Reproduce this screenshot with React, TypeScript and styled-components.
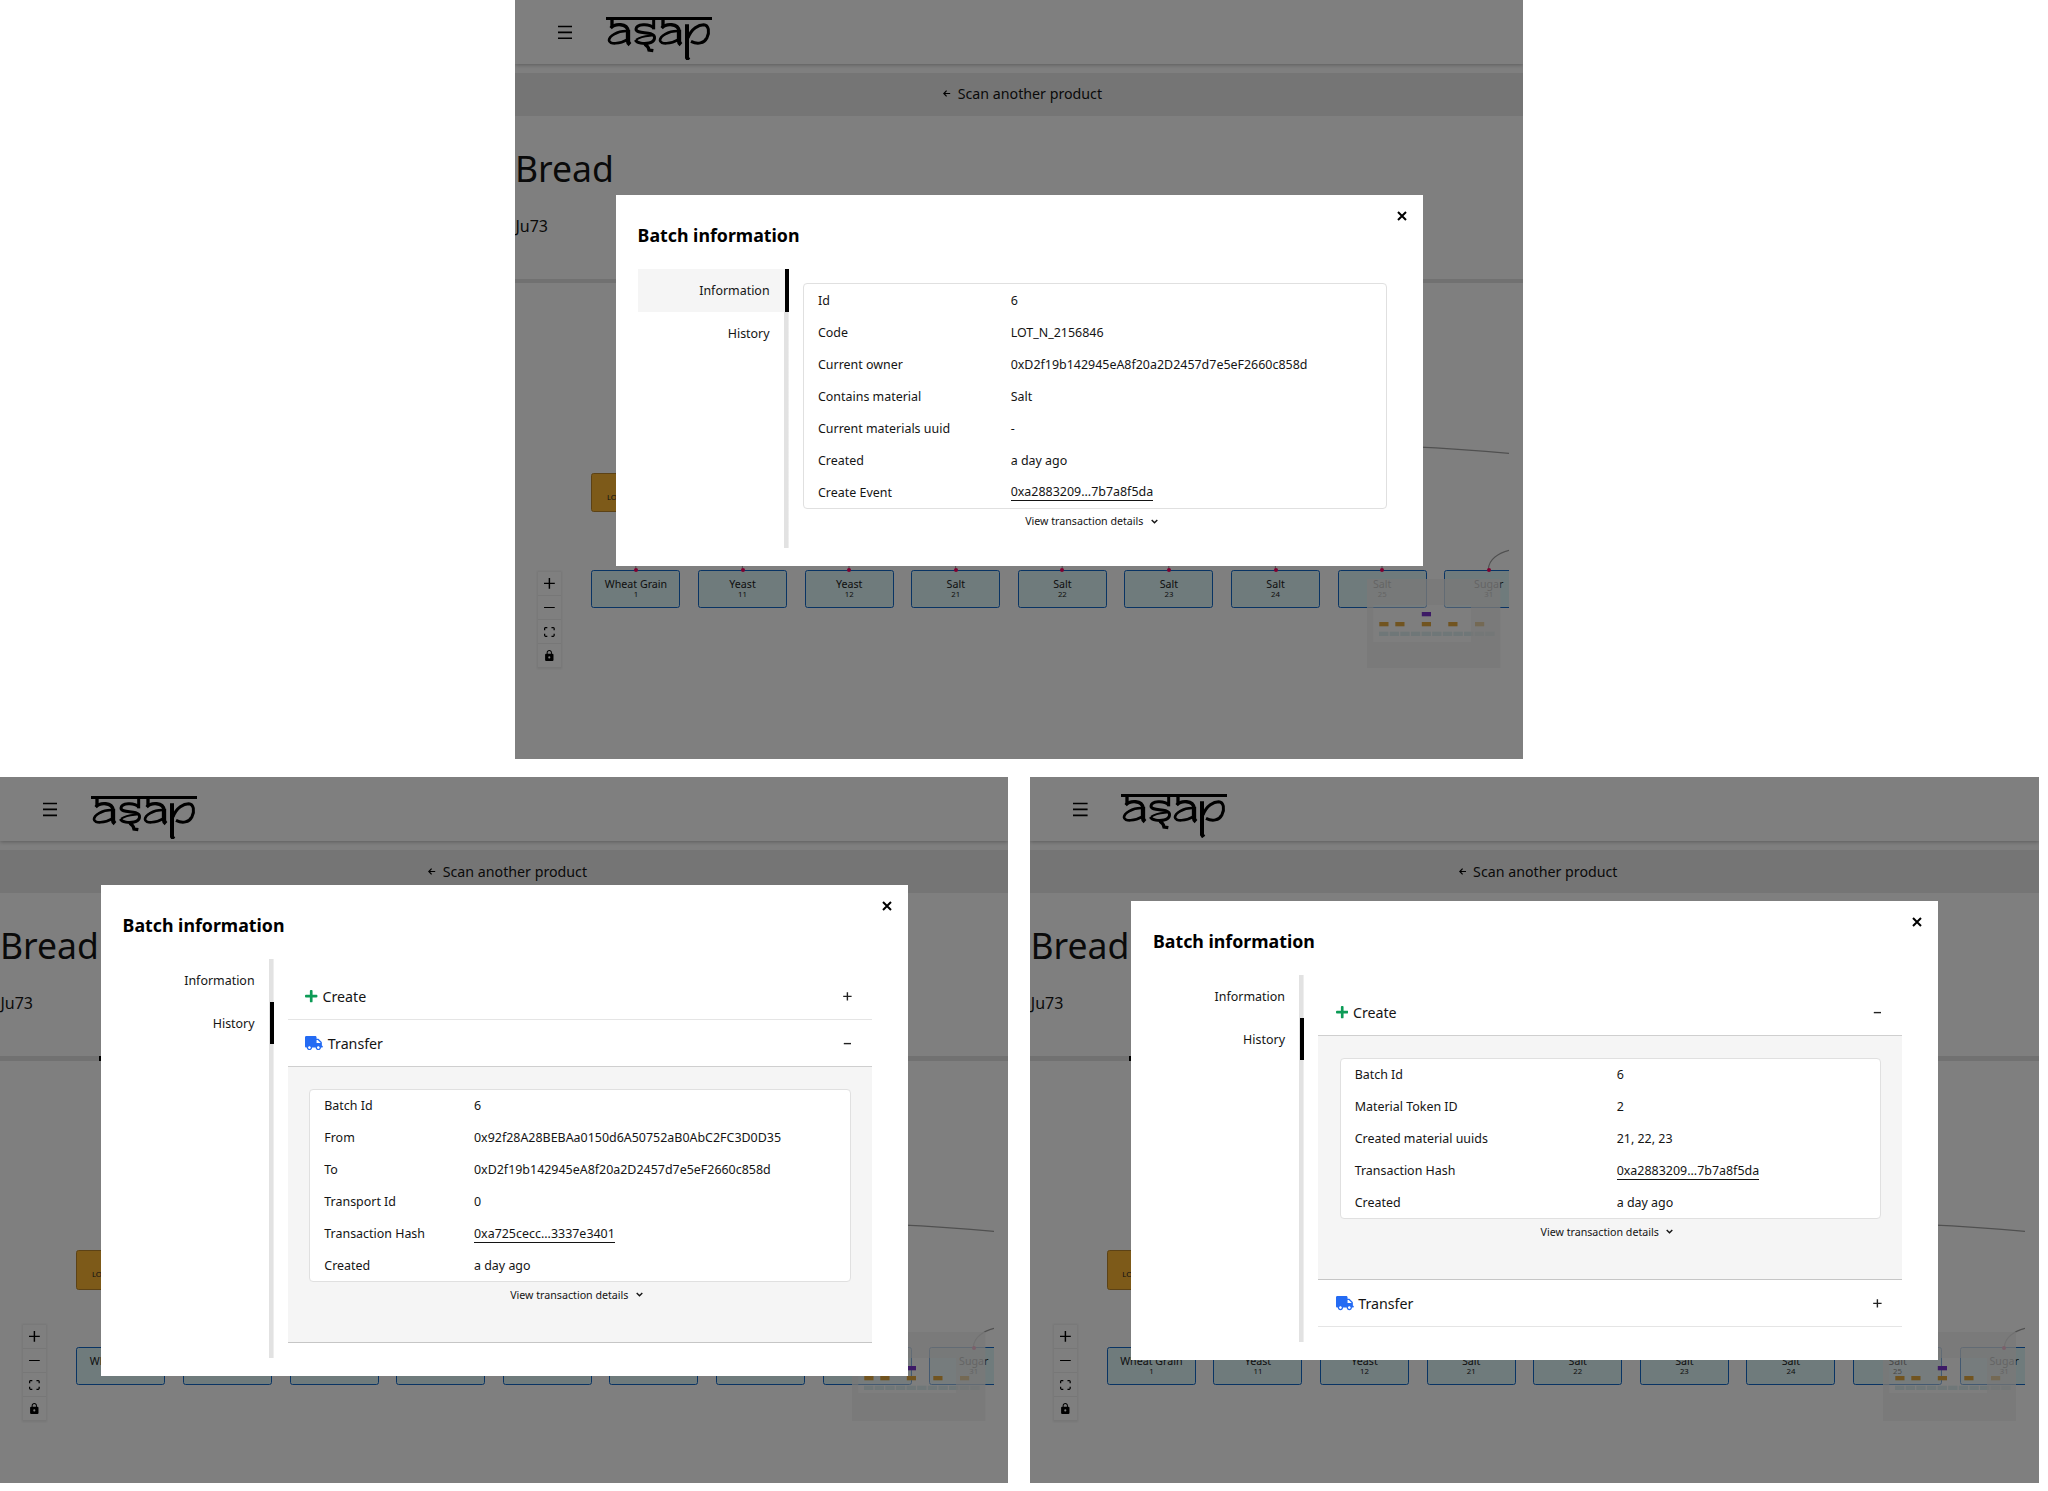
import React from "react";
import styled, { createGlobalStyle } from "styled-components";
import { FaPlus, FaTruck } from "react-icons/fa";

const GlobalStyle = createGlobalStyle`
  * { box-sizing: border-box; }
  body {
    margin: 0;
    background: #fff;
    color: #141414;
    font-family: "Noto Sans", "Open Sans", sans-serif;
    font-size: 12.44px;
    overflow: hidden;
  }
`;

/* ---------- Board with the three screens ---------- */

const Board = styled.main`
  display: flex;
  flex-direction: column;
  gap: 18px;
  width: 2048px;
  height: 1491px;
`;

const BoardRow = styled.div<{ $indent?: number }>`
  display: flex;
  gap: 22px;
  padding-left: ${(p) => p.$indent ?? 0}px;
`;

const Screen = styled.section<{ $height: number }>`
  position: relative;
  flex: none;
  width: 1008.4px;
  height: ${(p) => p.$height}px;
  overflow: hidden;
  background: #fff;
`;

/* ---------- Page behind the dialog ---------- */

const Header = styled.header`
  display: flex;
  align-items: flex-start;
  height: 64px;
  padding: 17px 0 0 42.6px;
  box-shadow: 0 1px 4px rgba(0, 0, 0, 0.28);
`;

const MenuIcon = styled.svg`
  width: 14.6px;
  height: 14.6px;
  margin-top: 7.6px;
`;

const Logo = styled.svg<{ $drop: number }>`
  width: 106px;
  height: 43.4px;
  margin: ${(p) => p.$drop}px 0 0 33.8px;
`;

const ScanBar = styled.div`
  display: flex;
  align-items: center;
  justify-content: center;
  height: 42.6px;
  margin-top: 9px;
  padding-bottom: 1px;
  background: #ebebeb;
  font-size: 14.22px;
`;

const ArrowBox = styled.span`
  display: flex;
  justify-content: center;
  width: 21.4px;
`;

const Product = styled.div`
  display: flex;
  flex-direction: column;
  height: 163.4px;
  padding-top: 28px;
`;

const ProductName = styled.h1`
  margin: 0;
  font-size: 35.56px;
  font-weight: 400;
  line-height: 49px;
`;

const ProductCode = styled.div`
  margin: 22.4px 0 0 0.4px;
  font-size: 16px;
  line-height: 22px;
`;

const TabStrip = styled.div`
  display: flex;
  height: 4.4px;
  padding-left: 99px;
  background: #e2e2e2;
`;

const TabMark = styled.i`
  width: 98px;
  background: #000;
`;

const Canvas = styled.div<{ $height: number }>`
  position: relative;
  height: ${(p) => p.$height}px;
  margin: 0 14.2px;
  overflow: hidden;
`;

const Edges = styled.svg`
  position: absolute;
  inset: 0;
  width: 980px;
  height: 400px;
`;

const NodeBox = styled.div<{ $kind: "batch" | "material" }>`
  position: absolute;
  display: flex;
  flex-direction: column;
  align-items: center;
  width: 89px;
  height: ${(p) => (p.$kind === "batch" ? 39.6 : 37.6)}px;
  padding-top: ${(p) => (p.$kind === "batch" ? 20.4 : 7)}px;
  border: 1.2px solid ${(p) => (p.$kind === "batch" ? "#b9852c" : "#1268c8")};
  border-radius: 2.6px;
  background: ${(p) => (p.$kind === "batch" ? "#fab432" : "#def6f8")};
  color: #222;
`;

const NodeName = styled.span`
  font-size: 10.67px;
  line-height: 13px;
`;

const NodeId = styled.span`
  font-size: 7.8px;
  line-height: 7px;
`;

const Handle = styled.i`
  position: absolute;
  top: -2.6px;
  left: 41.5px;
  width: 4px;
  height: 4px;
  border-radius: 50%;
  background: #ff0060;
`;

const Controls = styled.div`
  position: absolute;
  left: 9px;
  bottom: 8.9px;
  display: flex;
  flex-direction: column;
  width: 23.2px;
  box-shadow: 0 0 2px 1px rgba(0, 0, 0, 0.08);
`;

const ControlButton = styled.div`
  display: flex;
  align-items: center;
  justify-content: center;
  height: 24.1px;
  border-bottom: 1px solid #eee;
  background: #fefefe;

  svg {
    width: 10.8px;
    max-height: 11px;
  }
`;

const MiniMap = styled.svg`
  position: absolute;
  right: 8.7px;
  bottom: 8.9px;
  width: 133.3px;
  height: 89px;
`;

/* ---------- Dialog ---------- */

const Backdrop = styled.div<{ $drop: number }>`
  position: absolute;
  inset: 0;
  display: flex;
  align-items: center;
  justify-content: center;
  padding: ${(p) => p.$drop}px 0 0 0.4px;
  background: rgba(0, 0, 0, 0.5);
`;

const Dialog = styled.div`
  position: relative;
  width: 806.6px;
  padding: 28.4px 35.8px 17.5px 21.5px;
  background: #fff;
`;

const CloseButton = styled.svg`
  position: absolute;
  top: 16.4px;
  right: 15.8px;
  width: 10px;
  height: 10px;
`;

const DialogTitle = styled.h2`
  margin: 0 0 21.1px;
  font-size: 17.78px;
  font-weight: 700;
  line-height: 24.8px;
  color: #000;
`;

const DialogBody = styled.div`
  display: flex;
  gap: 14.4px;
`;

const SideTabs = styled.nav`
  flex: none;
  width: 151px;
  background: linear-gradient(#e2e2e2, #e2e2e2) right / 4.6px 100% no-repeat;
`;

const SideTab = styled.div<{ $active: boolean; $shaded: boolean }>`
  display: flex;
  align-items: center;
  justify-content: flex-end;
  height: 42.67px;
  padding-right: 15px;
  border-right: 4.6px solid ${(p) => (p.$active ? "#000" : "transparent")};
  background: ${(p) => (p.$shaded ? "#f5f5f5" : "transparent")};
  background-clip: padding-box;
`;

const Content = styled.div<{ $bottom: number }>`
  flex: 1;
  min-width: 0;
  padding: 14.2px 0 ${(p) => p.$bottom}px;
`;

const Card = styled.div`
  border: 1px solid #e0e0e0;
  border-radius: 4px;
  background: #fff;
`;

const Row = styled.div<{ $labelWidth: number }>`
  display: grid;
  grid-template-columns: ${(p) => p.$labelWidth}px 1fr;
  align-items: center;
  height: 32px;
  padding-left: 14px;

  &:last-child {
    margin-bottom: -0.6px;
  }
`;

const HashLink = styled.span`
  display: inline-block;
  line-height: 16px;
  border-bottom: 1px solid #141414;
`;

const Details = styled.div`
  display: flex;
  align-items: center;
  justify-content: center;
  height: 15px;
  margin-top: 5px;
  font-size: 10.67px;
`;

const Chevron = styled.svg`
  width: 7px;
  height: 5px;
  margin: 0 7.15px;
`;

const AccordionHead = styled.div<{ $open: boolean }>`
  display: flex;
  align-items: center;
  height: 47px;
  padding: 0 20px 0 17.5px;
  border-bottom: 1px solid ${(p) => (p.$open ? "#cfcfcf" : "#e5e5e5")};
  font-size: 14.22px;
`;

const KindIcon = styled.span<{ $width: number; $color: string }>`
  display: flex;
  width: ${(p) => p.$width}px;
  margin-right: 4.6px;
  color: ${(p) => p.$color};

  svg {
    width: ${(p) => p.$width}px;
    height: 14.22px;
  }
`;

const Toggle = styled.svg`
  width: 8.8px;
  height: 8.8px;
  margin-left: auto;
`;

const AccordionPanel = styled.div`
  padding: 21.4px 21.3px 40.4px;
  border-bottom: 1px solid #c6c6c6;
  background: #f5f5f5;
`;

/* ---------- Data ---------- */

type Entry = { label: string; value: string; link?: boolean };

const information: Entry[] = [
  { label: "Id", value: "6" },
  { label: "Code", value: "LOT_N_2156846" },
  { label: "Current owner", value: "0xD2f19b142945eA8f20a2D2457d7e5eF2660c858d" },
  { label: "Contains material", value: "Salt" },
  { label: "Current materials uuid", value: "-" },
  { label: "Created", value: "a day ago" },
  { label: "Create Event", value: "0xa2883209...7b7a8f5da", link: true },
];

const transfer: Entry[] = [
  { label: "Batch Id", value: "6" },
  { label: "From", value: "0x92f28A28BEBAa0150d6A50752aB0AbC2FC3D0D35" },
  { label: "To", value: "0xD2f19b142945eA8f20a2D2457d7e5eF2660c858d" },
  { label: "Transport Id", value: "0" },
  { label: "Transaction Hash", value: "0xa725cecc...3337e3401", link: true },
  { label: "Created", value: "a day ago" },
];

const creation: Entry[] = [
  { label: "Batch Id", value: "6" },
  { label: "Material Token ID", value: "2" },
  { label: "Created material uuids", value: "21, 22, 23" },
  { label: "Transaction Hash", value: "0xa2883209...7b7a8f5da", link: true },
  { label: "Created", value: "a day ago" },
];

const materials: [string, string][] = [
  ["Wheat Grain", "1"],
  ["Yeast", "11"],
  ["Yeast", "12"],
  ["Salt", "21"],
  ["Salt", "22"],
  ["Salt", "23"],
  ["Salt", "24"],
  ["Salt", "25"],
  ["Sugar", "31"],
];

const NODE_LEFT = 62.3;
const NODE_PITCH = 106.6;
const NODE_TOP = 286.6;

/* ---------- Parts ---------- */

function LetterA({ x }: { x: number }) {
  return (
    <g transform={`translate(${x} 0)`}>
      <path d="M291 85 V109" strokeWidth="10" />
      <path d="M287 111 C300 97 337 96 339 120" strokeWidth="10" />
      <path d="M339 116 V150 Q339 156 345 161" strokeWidth="13" />
      <path d="M336 120 C306 119 282 136 282 148 C282 161 316 159 337 146" strokeWidth="8" />
    </g>
  );
}

function BrandLogo({ drop }: { drop: number }) {
  return (
    <Logo $drop={drop} viewBox="273 78 318 130" fill="none" stroke="#000">
      <path d="M273 82.5 H591" strokeWidth="9" />
      <LetterA x={0} />
      <path d="M416 85 V115" strokeWidth="9" />
      <path d="M416 111 C402 96 364 99 363 114 C363 127 392 123 407 128 C425 134 421 152 402 156 C386 160 366 156 361 147" strokeWidth="9" />
      <path d="M363 146 C380 134 396 135 414 133" strokeWidth="6" />
      <path d="M389 159 Q400 166 402 177 L415 179" strokeWidth="10" />
      <LetterA x={153} />
      <path d="M516 100 V200 L521 207" strokeWidth="12" />
      <path d="M519 141 C529 112 552 101 566 101 C582 102 584 124 576 140 C567 157 548 161 528 151" strokeWidth="9" />
    </Logo>
  );
}

function FlowControls() {
  return (
    <Controls>
      <ControlButton>
        <svg viewBox="0 0 32 32"><path d="M32 18.133H18.133V32h-4.266V18.133H0v-4.266h13.867V0h4.266v13.867H32z" /></svg>
      </ControlButton>
      <ControlButton>
        <svg viewBox="0 0 32 5"><path d="M0 0h32v4.2H0z" /></svg>
      </ControlButton>
      <ControlButton>
        <svg viewBox="0 0 32 30"><path d="M3.692 4.63c0-.53.4-.938.939-.938h5.215V0H4.708C2.13 0 0 2.054 0 4.63v5.216h3.692V4.631zM27.354 0h-5.2v3.692h5.17c.53 0 .984.4.984.939v5.215H32V4.631A4.624 4.624 0 0027.354 0zm.954 24.83c0 .532-.4.94-.939.94h-5.215v3.768h5.215c2.577 0 4.631-2.13 4.631-4.707v-5.139h-3.692v5.139zm-23.677.94c-.531 0-.939-.4-.939-.94v-5.138H0v5.139c0 2.577 2.13 4.707 4.708 4.707h5.138V25.77H4.631z" /></svg>
      </ControlButton>
      <ControlButton>
        <svg viewBox="0 0 25 32"><path d="M21.333 10.667H19.81V7.619C19.81 3.429 16.38 0 12.19 0 8 0 4.571 3.429 4.571 7.619v3.048H3.048A3.056 3.056 0 000 13.714v15.238A3.056 3.056 0 003.048 32h18.285a3.056 3.056 0 003.048-3.048V13.714a3.056 3.056 0 00-3.048-3.047zM12.19 24.533a3.056 3.056 0 01-3.047-3.047 3.056 3.056 0 013.047-3.048 3.056 3.056 0 013.048 3.048 3.056 3.056 0 01-3.048 3.047zm4.724-13.866H7.467V7.619c0-2.59 2.133-4.724 4.723-4.724 2.591 0 4.724 2.133 4.724 4.724v3.048z" /></svg>
      </ControlButton>
    </Controls>
  );
}

function FlowMap({ compact }: { compact: boolean }) {
  const viewHeight = compact ? 35 : 37;
  const shift = compact ? 1 : 0;
  return (
    <MiniMap viewBox="0 0 133.3 89">
      <rect width="133.3" height="89" fill="#fcfcfc" opacity="0.5" />
      <rect x="54.8" y={33 + shift} width="9.2" height="4.3" fill="#7a35cc" />
      {[12.3, 28.3, 54.8, 81.3, 108].map((x) => (
        <rect key={x} x={x} y={43 + shift} width="9.2" height="4.3" fill="#e2a840" />
      ))}
      {Array.from({ length: 11 }, (_, i) => (
        <rect key={i} x={12 + i * 10.63} y={52.7 + shift} width="9.4" height="4.3" fill="#deeef0" />
      ))}
      <path
        d={`M0 0H133.3V89H0Z M6.3 26V${26 + viewHeight}H104V26Z`}
        fillRule="evenodd"
        fill="#eeeeee"
        opacity="0.6"
      />
    </MiniMap>
  );
}

function ProductPage({
  canvasHeight,
  marked,
  logoDrop = 0,
}: {
  canvasHeight: number;
  marked: boolean;
  logoDrop?: number;
}) {
  return (
    <>
      <Header>
        <MenuIcon viewBox="0 0 14.6 14.6" stroke="#000" strokeWidth="1.7">
          <path d="M0 1.5H14.6M0 7.4H14.6M0 13.3H14.6" />
        </MenuIcon>
        <BrandLogo drop={logoDrop} />
      </Header>
      <ScanBar>
        <ArrowBox>
          <svg width="7.4" height="7" viewBox="0 0 7.4 7" fill="none" stroke="#000" strokeWidth="1.2">
            <path d="M7.2 3.5H1M3.6 0.6L0.8 3.5L3.6 6.4" />
          </svg>
        </ArrowBox>
        Scan another product
      </ScanBar>
      <Product>
        <ProductName>Bread</ProductName>
        <ProductCode>Ju73</ProductCode>
      </Product>
      <TabStrip>{marked && <TabMark />}</TabStrip>
      <Canvas $height={canvasHeight}>
        <Edges viewBox="0 0 980 400" fill="none" stroke="#a0a0a0" strokeWidth="1.1">
          <path d="M880 163.6 Q935 166 980 170.4" />
          <path d="M959.4 286.6 C959.4 276 970 270 980 267.4" />
          {materials.slice(0, 8).map(([, id], i) => (
            <path key={id} d={`M${NODE_LEFT + 44.5 + i * NODE_PITCH} 276V286`} />
          ))}
        </Edges>
        <NodeBox $kind="batch" style={{ left: NODE_LEFT, top: 189.3 }}>
          <NodeId>LOT_N_2156846</NodeId>
        </NodeBox>
        {materials.map(([name, id], i) => (
          <NodeBox key={id} $kind="material" style={{ left: NODE_LEFT + i * NODE_PITCH, top: NODE_TOP }}>
            <Handle />
            <NodeName>{name}</NodeName>
            <NodeId>{id}</NodeId>
          </NodeBox>
        ))}
        <FlowControls />
        <FlowMap compact={marked} />
      </Canvas>
    </>
  );
}

function DetailCard({ entries, labelWidth }: { entries: Entry[]; labelWidth: number }) {
  return (
    <>
      <Card>
        {entries.map((e) => (
          <Row key={e.label} $labelWidth={labelWidth}>
            <span>{e.label}</span>
            <span>{e.link ? <HashLink>{e.value}</HashLink> : e.value}</span>
          </Row>
        ))}
      </Card>
      <Details>
        View transaction details
        <Chevron viewBox="0 0 7 5" fill="none" stroke="#141414" strokeWidth="1.4">
          <path d="M0.7 0.9L3.5 3.7L6.3 0.9" />
        </Chevron>
      </Details>
    </>
  );
}

function AccordionItem({
  kind,
  open,
  children,
}: {
  kind: "Create" | "Transfer";
  open: boolean;
  children?: React.ReactNode;
}) {
  return (
    <>
      <AccordionHead $open={open}>
        {kind === "Create" ? (
          <KindIcon $width={12.44} $color="#0c9b56">
            <FaPlus />
          </KindIcon>
        ) : (
          <KindIcon $width={17.78} $color="#246bf3">
            <FaTruck />
          </KindIcon>
        )}
        {kind}
        <Toggle viewBox="0 0 8.8 8.8" stroke="#222" strokeWidth="1.4">
          <path d={open ? "M0.8 4.6H8" : "M0.2 4.4H8.6M4.4 0.2V8.6"} />
        </Toggle>
      </AccordionHead>
      {open && <AccordionPanel>{children}</AccordionPanel>}
    </>
  );
}

function BatchDialog({
  tab,
  bottom,
  drop = 0,
  children,
}: {
  tab: "Information" | "History";
  bottom: number;
  drop?: number;
  children: React.ReactNode;
}) {
  return (
    <Backdrop $drop={drop}>
      <Dialog>
        <CloseButton viewBox="0 0 10 10" stroke="#000" strokeWidth="2">
          <path d="M1 1L9 9M9 1L1 9" />
        </CloseButton>
        <DialogTitle>Batch information</DialogTitle>
        <DialogBody>
          <SideTabs>
            {(["Information", "History"] as const).map((t) => (
              <SideTab key={t} $active={t === tab} $shaded={t === tab && tab === "Information"}>
                {t}
              </SideTab>
            ))}
          </SideTabs>
          <Content $bottom={bottom}>{children}</Content>
        </DialogBody>
      </Dialog>
    </Backdrop>
  );
}

export default function App() {
  return (
    <>
      <GlobalStyle />
      <Board>
        <BoardRow $indent={515}>
          <Screen $height={759.4}>
            <ProductPage canvasHeight={393.8} marked={false} />
            <BatchDialog tab="Information" bottom={19.4} drop={1}>
              <DetailCard entries={information} labelWidth={192.7} />
            </BatchDialog>
          </Screen>
        </BoardRow>
        <BoardRow>
          <Screen $height={706}>
            <ProductPage canvasHeight={369.5} marked logoDrop={1.7} />
            <BatchDialog tab="History" bottom={15}>
              <AccordionItem kind="Create" open={false} />
              <AccordionItem kind="Transfer" open>
                <DetailCard entries={transfer} labelWidth={149.7} />
              </AccordionItem>
            </BatchDialog>
          </Screen>
          <Screen $height={706}>
            <ProductPage canvasHeight={369.5} marked />
            <BatchDialog tab="History" bottom={15}>
              <AccordionItem kind="Create" open>
                <DetailCard entries={creation} labelWidth={262} />
              </AccordionItem>
              <AccordionItem kind="Transfer" open={false} />
            </BatchDialog>
          </Screen>
        </BoardRow>
      </Board>
    </>
  );
}
